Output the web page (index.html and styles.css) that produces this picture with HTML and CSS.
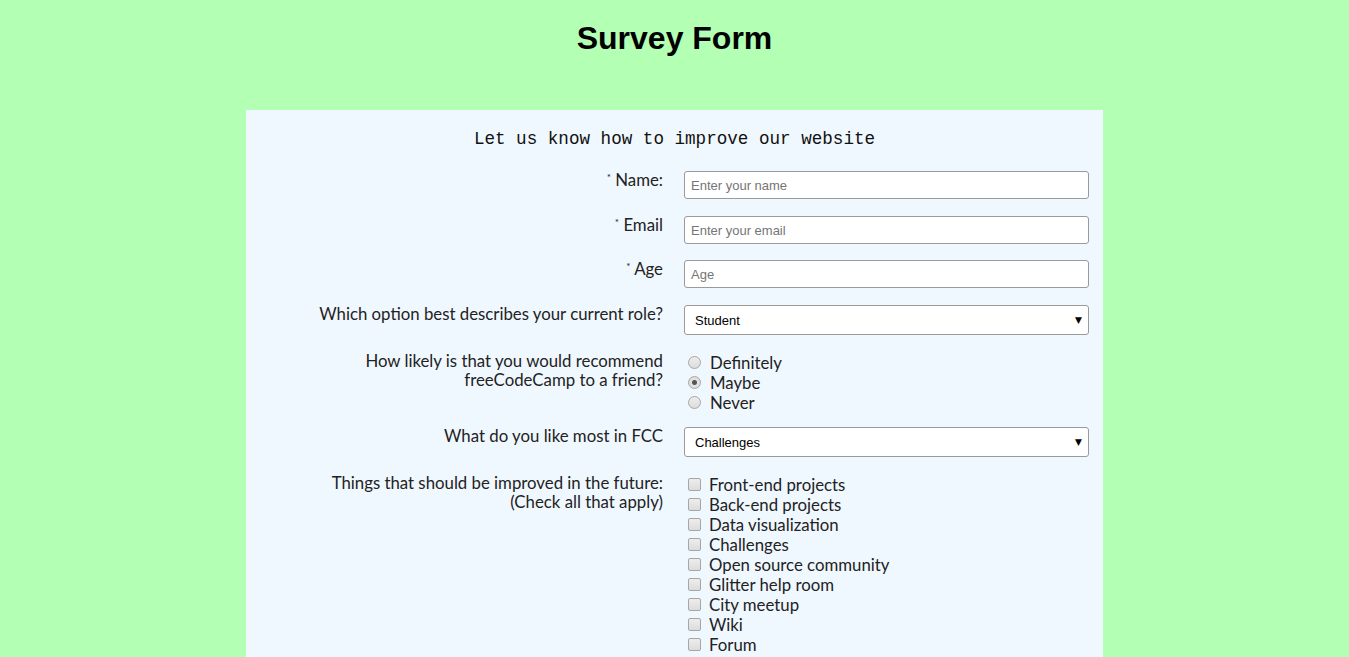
FILE: index.html
```html
<!DOCTYPE html>
<html lang="en">
<head>
<meta charset="utf-8">
<title>Survey Form</title>
<link rel="stylesheet" href="styles.css">
</head>
<body>
<header class="page-header">
  <h1 class="title">Survey Form</h1>
</header>
<main class="card">
  <p class="subtitle">Let us know how to improve our website</p>
  <form class="form">
    <div class="row">
      <label class="label" for="name"><sup class="req">*</sup> Name:</label>
      <input class="field" id="name" type="text" placeholder="Enter your name">
    </div>
    <div class="row">
      <label class="label" for="email"><sup class="req">*</sup> Email</label>
      <input class="field" id="email" type="email" placeholder="Enter your email">
    </div>
    <div class="row row-tight">
      <label class="label" for="age"><sup class="req">*</sup> Age</label>
      <input class="field" id="age" type="text" placeholder="Age">
    </div>
    <div class="row">
      <label class="label" for="role">Which option best describes your current role?</label>
      <div class="select-wrap">
        <select class="select" id="role">
          <option>Student</option>
        </select>
        <span class="arrow">▼</span>
      </div>
    </div>
    <div class="row">
      <div class="label">How likely is that you would recommend<br>freeCodeCamp to a friend?</div>
      <ul class="choices">
        <li class="choice"><input class="radio" type="radio" name="rec"><span>Definitely</span></li>
        <li class="choice"><input class="radio" type="radio" name="rec" checked><span>Maybe</span></li>
        <li class="choice"><input class="radio" type="radio" name="rec"><span>Never</span></li>
      </ul>
    </div>
    <div class="row row-tighter">
      <label class="label" for="most">What do you like most in FCC</label>
      <div class="select-wrap">
        <select class="select" id="most">
          <option>Challenges</option>
        </select>
        <span class="arrow">▼</span>
      </div>
    </div>
    <div class="row">
      <div class="label">Things that should be improved in the future:<br>(Check all that apply)</div>
      <ul class="choices">
        <li class="choice"><input class="check" type="checkbox"><span>Front-end projects</span></li>
        <li class="choice"><input class="check" type="checkbox"><span>Back-end projects</span></li>
        <li class="choice"><input class="check" type="checkbox"><span>Data visualization</span></li>
        <li class="choice"><input class="check" type="checkbox"><span>Challenges</span></li>
        <li class="choice"><input class="check" type="checkbox"><span>Open source community</span></li>
        <li class="choice"><input class="check" type="checkbox"><span>Glitter help room</span></li>
        <li class="choice"><input class="check" type="checkbox"><span>City meetup</span></li>
        <li class="choice"><input class="check" type="checkbox"><span>Wiki</span></li>
        <li class="choice"><input class="check" type="checkbox"><span>Forum</span></li>
      </ul>
    </div>
  </form>
</main>
</body>
</html>
```
FILE: styles.css
```css
html, body {
  margin: 0;
  padding: 0;
}
body {
  background: #b3ffb3;
  font-family: "Lato", "Liberation Sans", sans-serif;
  color: #222;
  overflow-x: hidden;
}
.page-header {
  padding-top: 20px;
  padding-bottom: 53px;
}
.title {
  margin: 0;
  text-align: center;
  font-family: "Liberation Sans", Arial, sans-serif;
  font-weight: bold;
  font-size: 32px;
  line-height: 37px;
  color: #000;
}
.card {
  width: 857px;
  margin: 0 auto;
  background: #f0f8ff;
  padding: 20px 14px 40px 0;
  box-sizing: border-box;
}
.subtitle {
  margin: 0 0 23px;
  text-align: center;
  font-family: "Liberation Mono", "Courier New", monospace;
  font-size: 17.6px;
  line-height: 18px;
  color: #111;
  padding-left: 14px;
}
.form {
  display: flex;
  flex-direction: column;
}
.row {
  display: grid;
  grid-template-columns: 417px 405px;
  column-gap: 21px;
  align-items: start;
  margin-top: 17px;
}
.row:first-child { margin-top: 0; }
.row-tight { margin-top: 16px; }
.row-tighter { margin-top: 15px; }
.label {
  margin-top: -1px;
  text-align: right;
  font-size: 16.8px;
  line-height: 19px;
  color: #222;
}
.req {
  font-size: 10px;
  vertical-align: 5px;
  line-height: 0;
}
.field {
  box-sizing: border-box;
  width: 405px;
  height: 28px;
  margin: 0;
  padding: 0 6px;
  border: 1px solid #9a9a9a;
  border-radius: 3px;
  background: #fff;
  font-family: "Liberation Sans", Arial, sans-serif;
  font-size: 13px;
  color: #000;
}
.field::placeholder { color: #757575; }
.select-wrap {
  position: relative;
  width: 405px;
  height: 30px;
}
.select {
  appearance: none;
  -webkit-appearance: none;
  box-sizing: border-box;
  width: 100%;
  height: 30px;
  margin: 0;
  padding: 0 10px;
  border: 1px solid #9a9a9a;
  border-radius: 3px;
  background: #fff;
  font-family: "Liberation Sans", Arial, sans-serif;
  font-size: 13px;
  color: #000;
}
.arrow {
  position: absolute;
  right: 7px;
  top: 9px;
  font-size: 9px;
  line-height: 12px;
  color: #000;
  pointer-events: none;
  font-family: "DejaVu Sans", sans-serif;
}
.choices {
  list-style: none;
  margin: 0;
  padding: 0;
}
.choice {
  display: flex;
  align-items: center;
  height: 20px;
  font-size: 16.8px;
  color: #222;
}
.radio, .check {
  appearance: none;
  -webkit-appearance: none;
  box-sizing: border-box;
  width: 13px;
  height: 13px;
  margin: 0 9px 0 4px;
  border: 1px solid #a6a6a6;
  background: linear-gradient(#ededed, #dcdcdc);
  flex: none;
}
.radio {
  border-radius: 50%;
}
.radio:checked {
  background: radial-gradient(circle, #555 0, #555 2px, #e2e2e2 3px, #dcdcdc 100%);
}
.check {
  border-radius: 2px;
  margin-right: 8px;
}
```
